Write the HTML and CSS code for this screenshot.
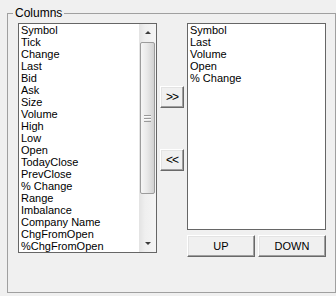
FILE: index.html
```html
<!DOCTYPE html>
<html>
<head>
<meta charset="utf-8">
<title>Columns</title>
<link rel="stylesheet" href="styles.css">
</head>
<body>
<fieldset class="group">
  <legend class="group-title">Columns</legend>
  <div class="group-body">
    <div class="listbox listbox-avail">
      <ul class="items">
        <li>Symbol</li>
        <li>Tick</li>
        <li>Change</li>
        <li>Last</li>
        <li>Bid</li>
        <li>Ask</li>
        <li>Size</li>
        <li>Volume</li>
        <li>High</li>
        <li>Low</li>
        <li>Open</li>
        <li>TodayClose</li>
        <li>PrevClose</li>
        <li>% Change</li>
        <li>Range</li>
        <li>Imbalance</li>
        <li>Company Name</li>
        <li>ChgFromOpen</li>
        <li>%ChgFromOpen</li>
      </ul>
      <div class="vscroll">
        <div class="vs-btn"><span class="arrow-up"></span></div>
        <div class="vs-track">
          <div class="vs-thumb"><span class="grip"></span></div>
        </div>
        <div class="vs-btn"><span class="arrow-down"></span></div>
      </div>
    </div>
    <div class="move-col">
      <button class="btn btn-move">&gt;&gt;</button>
      <button class="btn btn-move btn-remove">&lt;&lt;</button>
    </div>
    <div class="selected-col">
      <div class="listbox listbox-sel">
        <ul class="items">
          <li>Symbol</li>
          <li>Last</li>
          <li>Volume</li>
          <li>Open</li>
          <li>% Change</li>
        </ul>
      </div>
      <div class="order-row">
        <button class="btn btn-order">UP</button>
        <button class="btn btn-order">DOWN</button>
      </div>
    </div>
  </div>
</fieldset>
</body>
</html>
```

FILE: styles.css
```css
html, body {
  margin: 0;
  background: #f0f0f0;
  overflow: hidden;
  height: 296px;
}

body {
  padding: 7px 0 0 7px;
  box-sizing: border-box;
  font-family: "Liberation Sans", Arial, sans-serif;
  font-size: 11px;
  color: #000;
}

.group {
  margin: 0;
  padding: 0;
  min-width: 0;
  width: 329px;
  border: 1px solid #a0a0a0;
  box-sizing: border-box;
}

.group-title {
  margin-left: 5px;
  padding: 0 2px;
  font-size: 12px;
  line-height: 13px;
  height: 13px;
}

.group-body {
  display: flex;
  align-items: flex-start;
  height: 272px;
  padding: 3px 0 0 10px;
  box-sizing: border-box;
}

.listbox {
  display: flex;
  background: #fff;
  border: 1px solid #666;
  box-sizing: border-box;
}

.listbox-avail {
  width: 139px;
  height: 230px;
}

.listbox-sel {
  width: 139px;
  height: 207px;
}

.items {
  flex: 1;
  list-style: none;
  margin: 0;
  padding: 0 0 0 2px;
  line-height: 12px;
  white-space: nowrap;
  overflow: hidden;
}

.vscroll {
  width: 17px;
  display: flex;
  flex-direction: column;
  background: linear-gradient(to right, #e3e3e3, #efefef 35%, #f5f5f5);
}

.vs-btn {
  height: 17px;
  display: flex;
  align-items: center;
  justify-content: center;
}

.arrow-up {
  width: 0;
  height: 0;
  border-left: 3px solid transparent;
  border-right: 3px solid transparent;
  border-bottom: 3px solid #3c3c3c;
  margin-left: 1px;
}

.arrow-down {
  width: 0;
  height: 0;
  border-left: 3px solid transparent;
  border-right: 3px solid transparent;
  border-top: 3px solid #3c3c3c;
  margin-left: 1px;
}

.vs-track {
  flex: 1;
  padding-top: 1px;
}

.vs-thumb {
  width: 15px;
  height: 152px;
  margin-left: 1px;
  box-sizing: border-box;
  border: 1px solid #9c9c9c;
  border-radius: 2px;
  background: linear-gradient(to right, #f6f6f6, #e9e9e9 45%, #d2d2d2);
  display: flex;
  align-items: center;
  justify-content: center;
}

.grip {
  width: 7px;
  height: 7px;
  background: repeating-linear-gradient(to bottom, #9a9a9a 0 1px, #fafafa 1px 2px, transparent 2px 3px);
}

.move-col {
  display: flex;
  flex-direction: column;
  margin-left: 3px;
  padding-top: 63px;
}

.btn {
  margin: 0;
  padding: 0;
  box-sizing: border-box;
  font-family: "Liberation Sans", Arial, sans-serif;
  font-size: 11px;
  color: #000;
  background: #f0f0f0;
  border: 1px solid;
  border-color: #fff #696969 #696969 #fff;
  box-shadow: inset -1px -1px 0 #a0a0a0, inset 1px 1px 0 #e3e3e3;
}

.btn-move {
  width: 24px;
  height: 22px;
  font-size: 12px;
  letter-spacing: -1px;
}

.btn-remove {
  margin-top: 41px;
}

.selected-col {
  display: flex;
  flex-direction: column;
  margin-left: 3px;
}

.order-row {
  display: flex;
  gap: 3px;
  margin-top: 5px;
}

.btn-order {
  width: 68px;
  height: 22px;
}
```
